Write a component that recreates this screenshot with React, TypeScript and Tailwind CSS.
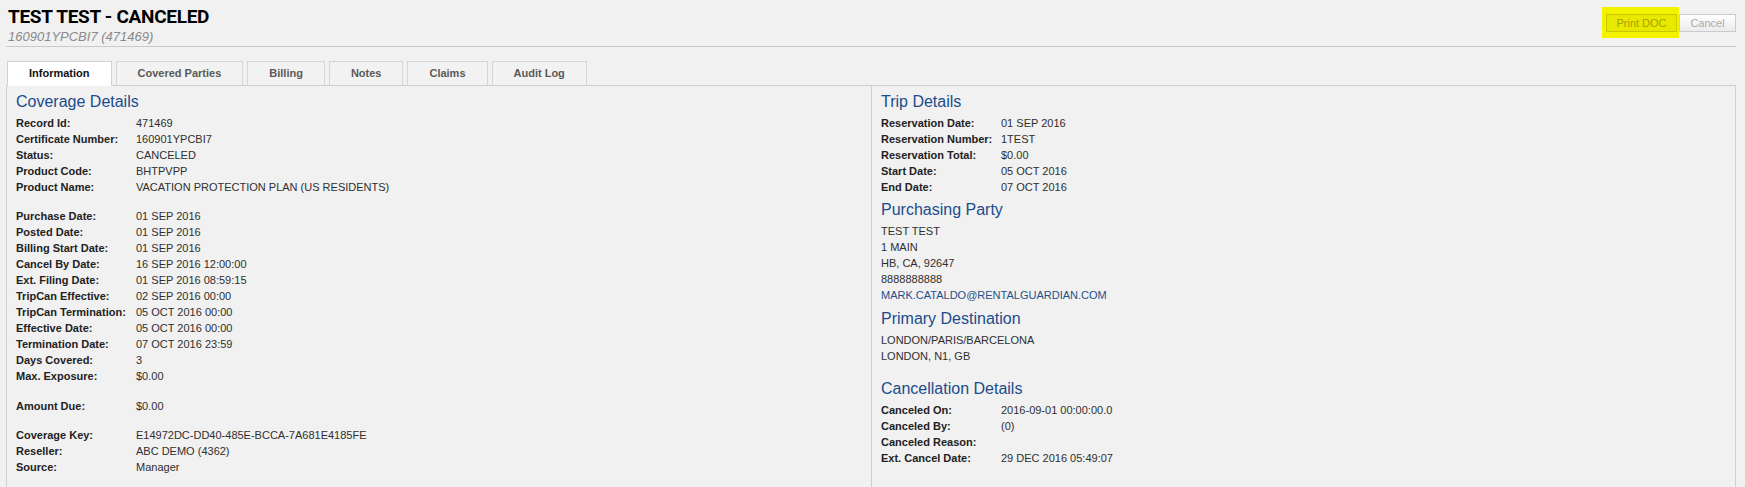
import React from 'react';

type Item = { label: string; value?: string } | 'gap13' | 'gap14';

const coverage: Item[] = [
  { label: 'Record Id:', value: '471469' },
  { label: 'Certificate Number:', value: '160901YPCBI7' },
  { label: 'Status:', value: 'CANCELED' },
  { label: 'Product Code:', value: 'BHTPVPP' },
  { label: 'Product Name:', value: 'VACATION PROTECTION PLAN (US RESIDENTS)' },
  'gap13',
  { label: 'Purchase Date:', value: '01 SEP 2016' },
  { label: 'Posted Date:', value: '01 SEP 2016' },
  { label: 'Billing Start Date:', value: '01 SEP 2016' },
  { label: 'Cancel By Date:', value: '16 SEP 2016 12:00:00' },
  { label: 'Ext. Filing Date:', value: '01 SEP 2016 08:59:15' },
  { label: 'TripCan Effective:', value: '02 SEP 2016 00:00' },
  { label: 'TripCan Termination:', value: '05 OCT 2016 00:00' },
  { label: 'Effective Date:', value: '05 OCT 2016 00:00' },
  { label: 'Termination Date:', value: '07 OCT 2016 23:59' },
  { label: 'Days Covered:', value: '3' },
  { label: 'Max. Exposure:', value: '$0.00' },
  'gap14',
  { label: 'Amount Due:', value: '$0.00' },
  'gap13',
  { label: 'Coverage Key:', value: 'E14972DC-DD40-485E-BCCA-7A681E4185FE' },
  { label: 'Reseller:', value: 'ABC DEMO (4362)' },
  { label: 'Source:', value: 'Manager' },
];

const trip: Item[] = [
  { label: 'Reservation Date:', value: '01 SEP 2016' },
  { label: 'Reservation Number:', value: '1TEST' },
  { label: 'Reservation Total:', value: '$0.00' },
  { label: 'Start Date:', value: '05 OCT 2016' },
  { label: 'End Date:', value: '07 OCT 2016' },
];

const cancellation: Item[] = [
  { label: 'Canceled On:', value: '2016-09-01 00:00:00.0' },
  { label: 'Canceled By:', value: '(0)' },
  { label: 'Canceled Reason:' },
  { label: 'Ext. Cancel Date:', value: '29 DEC 2016 05:49:07' },
];

const tabs = ['Information', 'Covered Parties', 'Billing', 'Notes', 'Claims', 'Audit Log'];

const Heading = ({ children, className = '' }: { children: React.ReactNode; className?: string }) => (
  <h3 className={`text-[16px] leading-[22px] mb-[2px] text-[#1b4c8c] font-normal ${className}`}>{children}</h3>
);

const Rows = ({ items }: { items: Item[] }) => (
  <div>
    {items.map((it, i) => {
      if (it === 'gap13') return <div key={i} className="h-[13px]" />;
      if (it === 'gap14') return <div key={i} className="h-[14px]" />;
      return (
        <div key={i} className="flex h-[16px] items-center leading-[16px]">
          <span className="w-[120px] shrink-0 font-bold text-[#222]">{it.label}</span>
          <span className="text-[#2f2f2f]">{it.value}</span>
        </div>
      );
    })}
  </div>
);

const Line = ({ children, className = '' }: { children: React.ReactNode; className?: string }) => (
  <div className={`h-[16px] leading-[16px] text-[#2f2f2f] ${className}`}>{children}</div>
);

export default function App() {
  return (
    <div className="min-h-screen bg-[#f1f1f1] pl-[6px] pr-[9px] font-['Liberation_Sans',Arial,sans-serif] text-[11px]">
      {/* header */}
      <div className="flex justify-between border-b border-[#cacaca] pb-[1px]">
        <div className="pl-[2px]">
          <h1 className="mt-[5px] font-['Roboto',Arial,sans-serif] text-[19px] font-bold leading-[24px] tracking-[-0.3px] text-black">
            TEST TEST - CANCELED
          </h1>
          <div className="text-[13px] italic leading-[16px] text-[#8a8a8a]">160901YPCBI7 (471469)</div>
        </div>
        <div className="flex items-start pt-[7px]">
          <div className="bg-[#f3f300] pl-[4px] pr-[2px] pt-[7px] pb-[6px]">
            <button className="flex h-[18px] w-[71px] items-center justify-center border border-[#c9c900] bg-[#e9e900] text-[11px] text-[#a3a300]">
              Print DOC
            </button>
          </div>
          <button className="mt-[7px] flex h-[18px] w-[57px] items-center justify-center border border-[#cbcbcb] bg-gradient-to-b from-white to-[#ebebeb] text-[11px] text-[#a8a8a8]">
            Cancel
          </button>
        </div>
      </div>

      {/* tabs */}
      <div className="mt-[14px] flex items-end gap-[4px] pl-[1px]">
        {tabs.map((t, i) =>
          i === 0 ? (
            <div
              key={t}
              className="relative z-10 -mb-px flex h-[25px] items-center border border-b-0 border-[#d3d3d3] bg-white px-[21px] pb-px font-bold text-[#111]"
            >
              {t}
            </div>
          ) : (
            <div
              key={t}
              className="flex h-[24px] items-center border border-b-0 border-[#d6d6d6] bg-[#f2f2f2] px-[21px] font-bold text-[#5a5a5a]"
            >
              {t}
            </div>
          )
        )}
      </div>

      {/* panel */}
      <div className="grid grid-cols-2 border border-[#d0d0d0] bg-[#f1f1f1]">
        <div className="pl-[9px] pt-[5px] pb-[30px]">
          <Heading>Coverage Details</Heading>
          <Rows items={coverage} />
        </div>
        <div className="border-l border-[#cfcfcf] pl-[9px] pt-[5px] pb-[30px]">
          <Heading>Trip Details</Heading>
          <Rows items={trip} />

          <Heading className="mt-[4px]">Purchasing Party</Heading>
          <Line>TEST TEST</Line>
          <Line>1 MAIN</Line>
          <Line>HB, CA, 92647</Line>
          <Line>8888888888</Line>
          <Line className="!text-[#1f4f8a]">MARK.CATALDO@RENTALGUARDIAN.COM</Line>

          <Heading className="mt-[5px]">Primary Destination</Heading>
          <Line>LONDON/PARIS/BARCELONA</Line>
          <Line>LONDON, N1, GB</Line>

          <Heading className="mt-[14px]">Cancellation Details</Heading>
          <Rows items={cancellation} />
        </div>
      </div>
    </div>
  );
}
